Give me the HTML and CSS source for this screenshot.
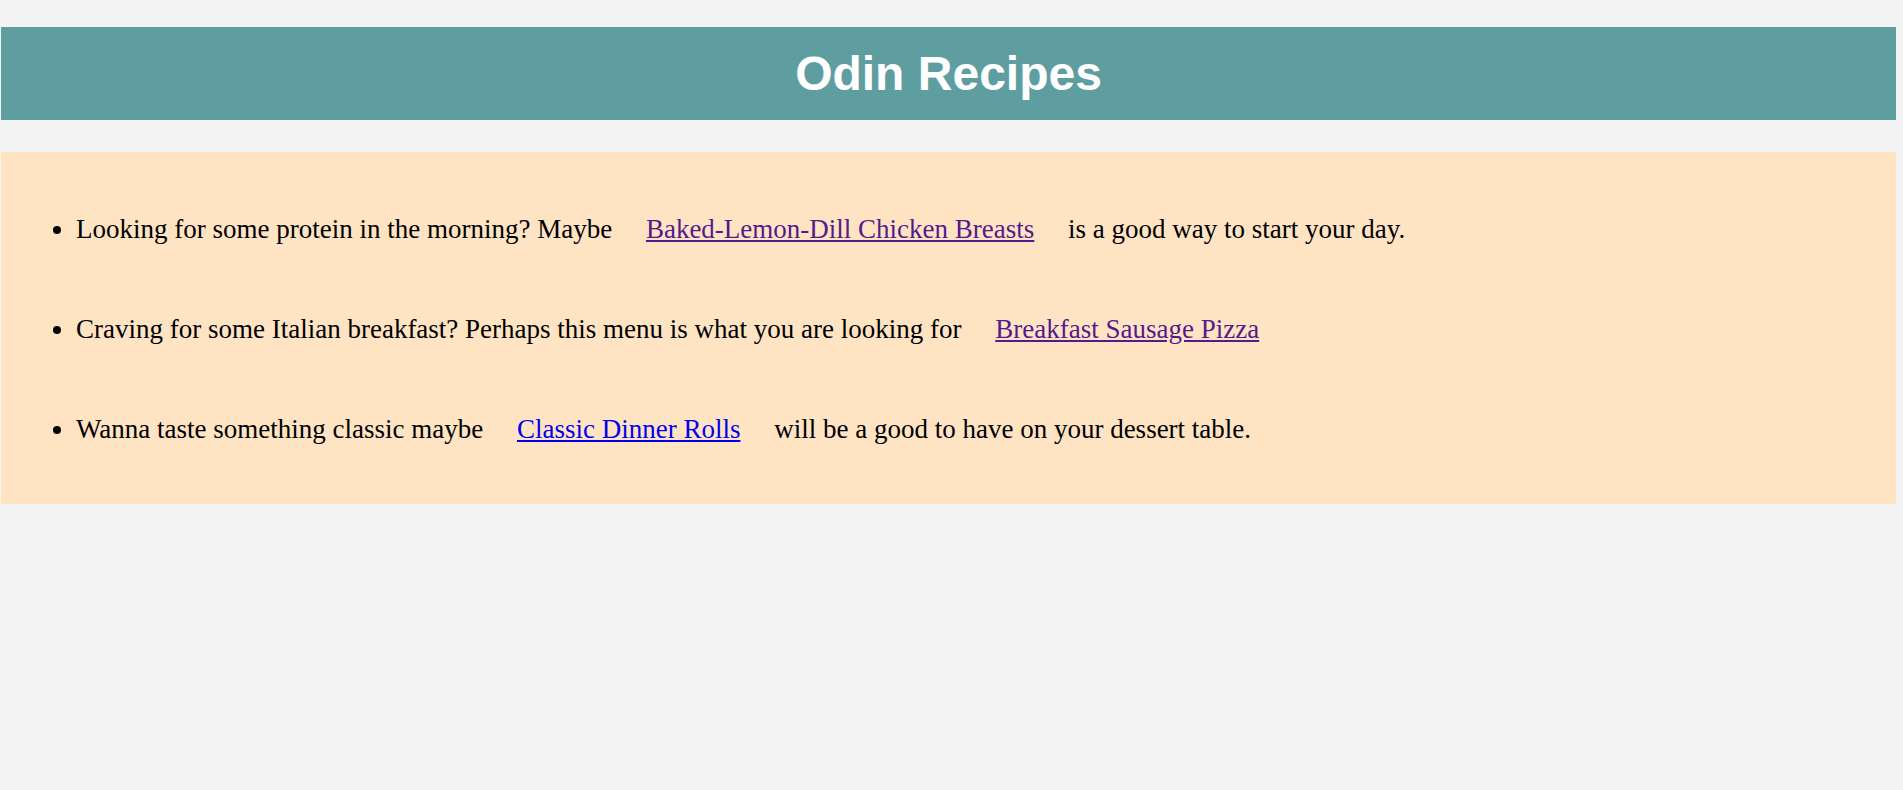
FILE: index.html
```html
<!DOCTYPE html>
<html lang="en">
<head>
<meta charset="utf-8">
<title>Odin Recipes</title>
<link rel="stylesheet" href="styles.css">
</head>
<body>
  <header class="banner">
    <h1 class="title">Odin Recipes</h1>
  </header>
  <section class="content">
    <ul class="recipes">
      <li>Looking for some protein in the morning? Maybe <a class="link visited" href="#">Baked-Lemon-Dill Chicken Breasts</a> is a good way to start your day.</li>
      <li>Craving for some Italian breakfast? Perhaps this menu is what you are looking for <a class="link visited" href="#">Breakfast Sausage Pizza</a></li>
      <li>Wanna taste something classic maybe <a class="link" href="#">Classic Dinner Rolls</a> will be a good to have on your dessert table.</li>
    </ul>
  </section>
</body>
</html>
```
FILE: styles.css
```css
html, body {
  background: #f3f3f3;
}
body {
  margin: 0;
  padding: 27px 7px 0 1px;
  font-family: "Liberation Serif", "Times New Roman", serif;
}
.banner {
  background: #5f9ea0;
  padding: 19px 0;
  margin-bottom: 32px;
}
.title {
  margin: 0;
  font-family: "Liberation Sans", Arial, sans-serif;
  font-size: 48px;
  font-weight: bold;
  line-height: 55px;
  color: #ffffff;
  text-align: center;
}
.content {
  background: #ffe4c4;
  padding: 27px 0 25px 35px;
}
.recipes {
  margin: 0;
  padding-left: 40px;
  font-size: 27px;
  line-height: 100px;
  color: #000;
}
.link {
  color: #0000ee;
  text-decoration: underline;
  margin: 0 1em;
}
.link.visited {
  color: #551a8b;
}
```
